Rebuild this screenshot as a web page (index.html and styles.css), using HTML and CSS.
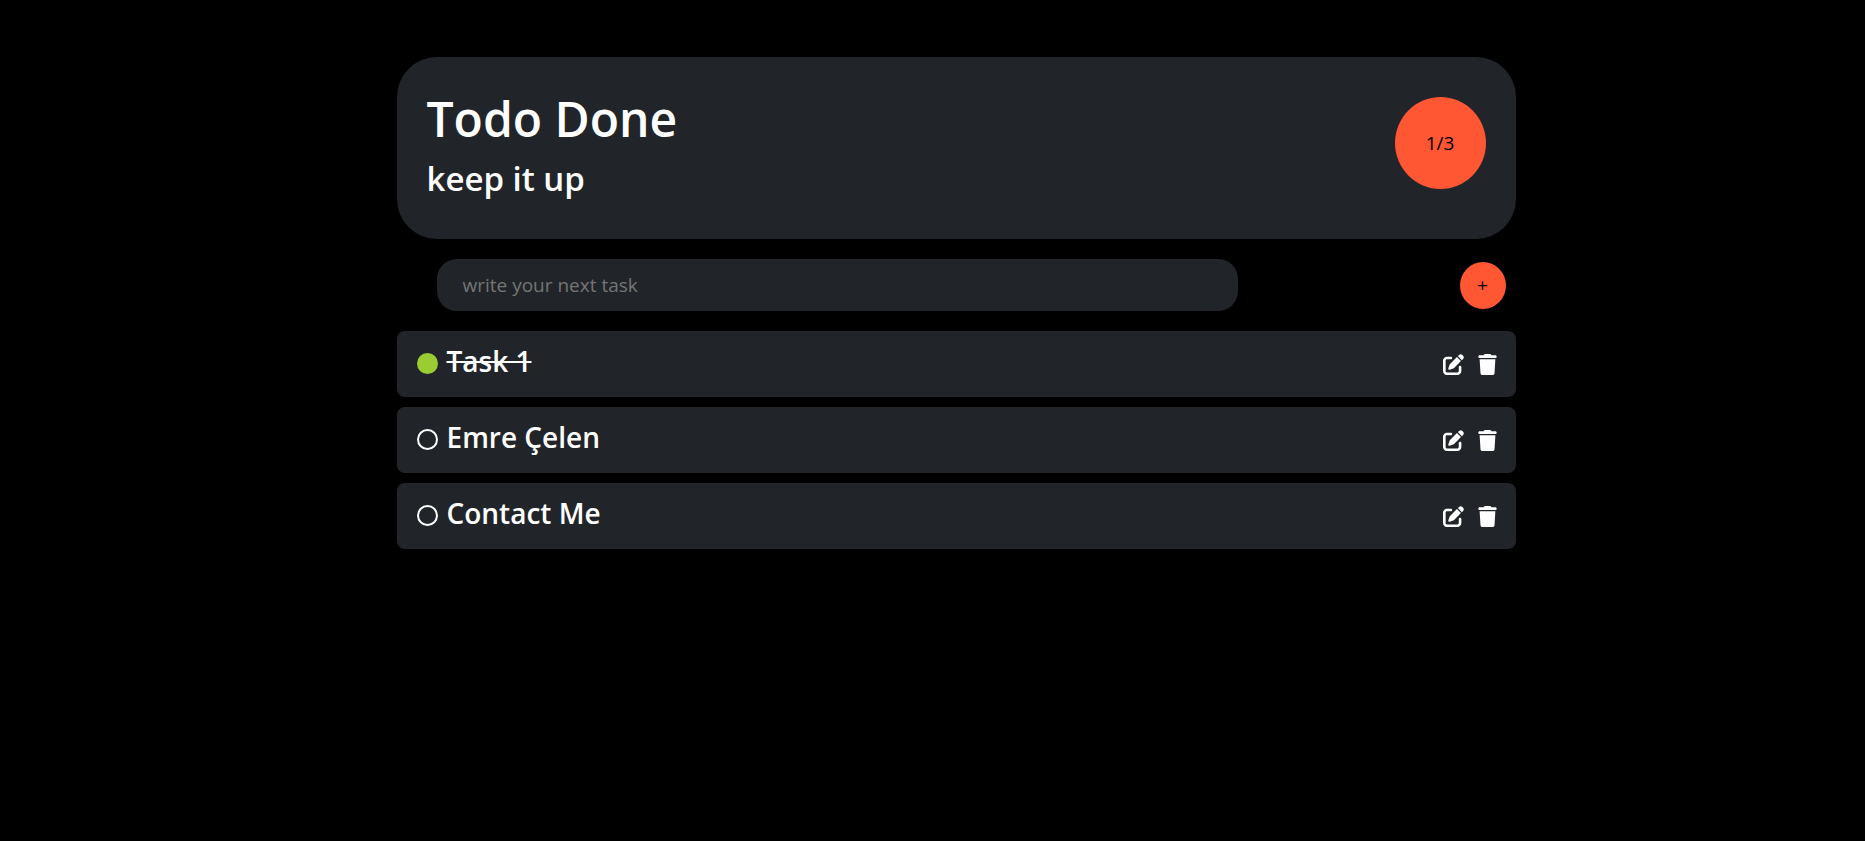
FILE: index.html
```html
<!DOCTYPE html>
<html lang="en">
<head>
<meta charset="utf-8">
<title>Todo Done</title>
<link rel="stylesheet" href="styles.css">
</head>
<body>
<svg class="sprite" aria-hidden="true">
  <symbol id="edit" viewBox="0 0 512 512"><path d="M471.6 21.7c-21.9-21.9-57.3-21.9-79.2 0L362.3 51.7l97.9 97.9 30.1-30.1c21.9-21.9 21.9-57.3 0-79.2L471.6 21.7zm-299.2 220c-6.1 6.1-10.8 13.6-13.5 21.9l-29.6 88.8c-2.9 8.6-.6 18.1 5.8 24.6s15.9 8.7 24.6 5.8l88.8-29.6c8.2-2.7 15.7-7.4 21.9-13.5L437.7 172.3 339.7 74.3 172.4 241.7zM96 64C43 64 0 107 0 160V416c0 53 43 96 96 96H352c53 0 96-43 96-96V320c0-17.700-14.300-32-32-32s-32 14.300-32 32v96c0 17.700-14.300 32-32 32H96c-17.700 0-32-14.300-32-32V160c0-17.700 14.300-32 32-32h96c17.700 0 32-14.300 32-32s-14.300-32-32-32H96z"/></symbol>
  <symbol id="trash" viewBox="0 0 448 512"><path d="M135.200 17.700L128 32H32C14.300 32 0 46.300 0 64S14.300 96 32 96H416c17.700 0 32-14.300 32-32s-14.300-32-32-32H320l-7.200-14.300C307.400 6.800 296.300 0 284.200 0H163.800c-12.100 0-23.200 6.800-28.600 17.700zM416 128H32L53.200 467c1.600 25.300 22.600 45 47.900 45H346.900c25.300 0 46.300-19.700 47.900-45L416 128z"/></symbol>
</svg>
<main class="app">
  <header class="summary">
    <div>
      <h1 class="title">Todo Done</h1>
      <h2 class="subtitle">keep it up</h2>
    </div>
    <p class="counter">1/3</p>
  </header>
  <form class="new-task">
    <input class="task-input" type="text" placeholder="write your next task" aria-label="New task">
    <button class="add" type="button" aria-label="Add task">+</button>
  </form>
  <ul class="tasks">
    <li class="task">
      <input class="check" type="checkbox" id="t1" checked>
      <label class="name" for="t1">Task 1</label>
      <button class="icon" type="button" aria-label="Edit"><svg class="glyph"><use href="#edit"/></svg></button>
      <button class="icon" type="button" aria-label="Delete"><svg class="glyph"><use href="#trash"/></svg></button>
    </li>
    <li class="task">
      <input class="check" type="checkbox" id="t2">
      <label class="name" for="t2">Emre Çelen</label>
      <button class="icon" type="button" aria-label="Edit"><svg class="glyph"><use href="#edit"/></svg></button>
      <button class="icon" type="button" aria-label="Delete"><svg class="glyph"><use href="#trash"/></svg></button>
    </li>
    <li class="task">
      <input class="check" type="checkbox" id="t3">
      <label class="name" for="t3">Contact Me</label>
      <button class="icon" type="button" aria-label="Edit"><svg class="glyph"><use href="#edit"/></svg></button>
      <button class="icon" type="button" aria-label="Delete"><svg class="glyph"><use href="#trash"/></svg></button>
    </li>
  </ul>
</main>
</body>
</html>
```

FILE: styles.css
```css
* { box-sizing: border-box; }
body {
  margin: 0;
  padding: 57px 0 40px 47px;
  background: #000;
  color: #fff;
  font-family: "Segoe UI", "Open Sans", "Noto Sans", sans-serif;
  font-size: 19px;
}
.sprite { display: none; }
.app {
  width: 60vw;
  margin: 0 auto;
  display: flex;
  flex-direction: column;
  gap: 20px;
}
.summary {
  display: flex;
  justify-content: space-between;
  align-items: flex-start;
  padding: 32px 30px;
  border-radius: 40px;
  background: #212529;
}
.title, .subtitle { margin: 0; font-weight: 600; }
.title { font-size: 48px; line-height: 60px; margin-bottom: 8px; }
.subtitle { font-size: 33px; line-height: 44px; padding-bottom: 6px; }
.counter {
  display: grid;
  place-items: center;
  width: 91px;
  height: 92px;
  margin: 8px 0 0;
  border-radius: 50%;
  background: #ff5733;
  color: #000;
}
.new-task {
  display: flex;
  align-items: center;
  justify-content: space-between;
  padding: 0 10px 0 40px;
}
.task-input {
  width: 75%;
  height: 52px;
  padding: 0 26px;
  border: 0;
  border-radius: 20px;
  background: #212529;
  color: #fff;
  font: inherit;
}
.task-input::placeholder { color: #757575; }
.add {
  width: 46px;
  height: 47px;
  padding: 0;
  border: 0;
  border-radius: 50%;
  background: #ff5733;
  color: #000;
  font: inherit;
}
.tasks {
  display: flex;
  flex-direction: column;
  gap: 10px;
  margin: 0;
  padding: 0;
  list-style: none;
}
.task {
  display: flex;
  align-items: center;
  padding: 12px 18px 18px 20px;
  border-radius: 8px;
  background: #212529;
}
.check {
  appearance: none;
  width: 21px;
  height: 21px;
  margin: 5px 9px 0 0;
  border: 2px solid #fff;
  border-radius: 50%;
}
.check:checked { border-color: #9acd32; background: #9acd32; }
.name { flex: 1; font-size: 28px; font-weight: 600; line-height: 36px; }
.check:checked + .name { flex: none; margin-right: auto; text-decoration: line-through; }
.icon {
  margin: 7px 0 0 13px;
  padding: 0;
  border: 0;
  background: none;
  color: #fff;
}
.glyph { display: block; width: 21px; height: 21px; fill: currentColor; }
```
